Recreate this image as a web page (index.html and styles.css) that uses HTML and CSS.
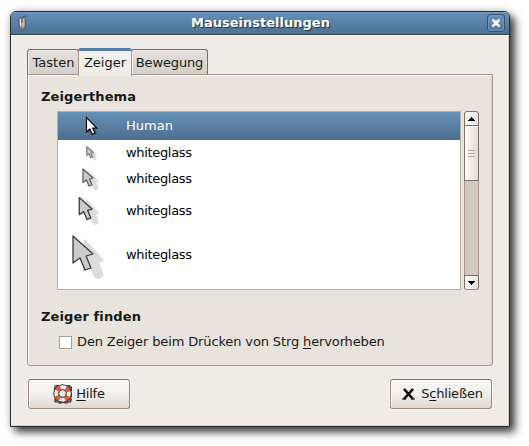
FILE: index.html
```html
<!DOCTYPE html>
<html lang="de">
<head>
<meta charset="utf-8">
<title>Mauseinstellungen</title>
<link rel="stylesheet" href="styles.css">
</head>
<body>
<svg class="defs" width="0" height="0" aria-hidden="true">
  <defs>
    <symbol id="glass" viewBox="0 0 36 46">
      <path d="M14 7l17 19-4.500 2 4.500 13q-3 4-7 1l-5-11-6 5z" fill="#dcdcdc" stroke="#dcdcdc" stroke-width="3" stroke-linejoin="round"/>
      <path d="M2 2v27l7-5 5 12 6-2-5-12 7-2z" fill="#cbcbcb" stroke="currentColor" stroke-width="1.300" vector-effect="non-scaling-stroke" stroke-linejoin="round"/>
    </symbol>
  </defs>
</svg>
<main class="window">
  <header class="titlebar">
    <svg class="mouse" width="12" height="16" viewBox="0 0 12 16"><path d="M5 3q0-2 5-2" fill="none" stroke="#3e5567"/><path d="M1.500 4Q3 2 5 2.500 8 2 8.500 4v7q-1 3-3 3.500-3-.5-3.500-4z" fill="#a39f9c" stroke="#4c5158" stroke-width=".8"/><path d="M3.500 4v7M6 4v8" stroke="#e0dcda"/><path d="M5 3v5" stroke="#56514f"/><path d="M5 11v2" stroke="#8c5b4c"/></svg>
    <h1 class="title">Mauseinstellungen</h1>
    <button class="close" aria-label="Schließen"><svg width="8" height="8" viewBox="0 0 8 8"><path d="M.5 .5l7 7M7.500 .5l-7 7" stroke="#fff" stroke-width="2.600"/></svg></button>
  </header>
  <div class="body">
    <nav class="tabs">
      <span class="tab first">Tasten</span><span class="tab active">Zeiger</span><span class="tab last">Bewegung</span>
    </nav>
    <section class="panel">
      <h2 class="heading">Zeigerthema</h2>
      <div class="picker">
        <div class="list">
          <div class="row selected"><span class="cursor"><svg class="human" width="16" height="20" viewBox="0 0 16 20"><path d="M4 3v14l3-3 3 5 3-1-2-5h3z" fill="#2f4a62" opacity=".7"/><path d="M2.500 1.500v14.500l3.300-3 2.300 5.200 2.800-1.200-2.300-5h4.200z" fill="#fff" stroke="#000" stroke-width="1.100"/></svg></span>Human</div>
          <div class="row r2"><span class="cursor"><svg class="small" width="12" height="15"><use href="#glass"/></svg></span><span class="name">whiteglass</span></div>
          <div class="row r3"><span class="cursor"><svg class="medium" width="18" height="23"><use href="#glass"/></svg></span><span class="name">whiteglass</span></div>
          <div class="row r4"><span class="cursor"><svg class="large" width="23" height="30"><use href="#glass"/></svg></span><span class="name">whiteglass</span></div>
          <div class="row r5"><span class="cursor"><svg class="huge" width="36" height="46"><use href="#glass"/></svg></span><span class="name">whiteglass</span></div>
        </div>
        <div class="scrollbar">
          <div class="step up"><svg width="7" height="4" viewBox="0 0 7 4"><path d="M3 0h1v1h1v1h1v1h1v1H0V3h1V2h1V1h1z"/></svg></div>
          <div class="thumb"><i></i><i></i><i></i></div>
          <div class="trough"></div>
          <div class="step down"><svg width="7" height="4" viewBox="0 0 7 4"><path d="M0 0h7v1H6v1H5v1H4v1H3V3H2V2H1V1H0z"/></svg></div>
        </div>
      </div>
      <h2 class="heading find">Zeiger finden</h2>
      <label class="check"><span class="box"></span><span class="label">Den Zeiger beim Drücken von Strg <u>h</u>ervorheben</span></label>
    </section>
    <footer class="actions">
      <button class="button help"><svg width="20" height="20" viewBox="0 0 20 20"><path d="M1.500 2l4-.5 9 0 4 .5 0 4 0 9-1 3.500-4 .5H6l-4-1-.5-4V6z" fill="#68686a" stroke="#343639" stroke-dasharray="4 2"/><circle cx="9.500" cy="9.500" r="6.500" fill="none" stroke="#343434" stroke-width="5.500"/><circle cx="9.500" cy="9.500" r="6.300" fill="none" stroke="#f1f0ed" stroke-width="4"/><circle cx="9.500" cy="9.500" r="6.300" fill="none" stroke="#e95427" stroke-width="4" stroke-dasharray="4.400 5.500" stroke-dashoffset="-2.700"/><circle cx="9.500" cy="9.500" r="3.800" fill="#e9e6e3" stroke="#4a4745"/></svg><span><u>H</u>ilfe</span></button>
      <button class="button shut"><svg width="13" height="12" viewBox="0 0 13 12"><path d="M2 1l9 10M11 1L2 11" stroke="#000" stroke-width="2.600"/><path d="M0 11h4M9 11h4" stroke="#000"/></svg><span>S<u>c</u>hließen</span></button>
    </footer>
  </div>
</main>
</body>
</html>
```

FILE: styles.css
```css
* { box-sizing: border-box; }
body {
  margin: 0;
  padding: 11px 0 0 10px;
  height: 446px;
  overflow: hidden;
  background: #fff;
  color: #151a18;
  font: 13px/16px "DejaVu Sans", sans-serif;
}
.defs { position: absolute; }
svg { display: block; flex: none; }
button { font: inherit; color: inherit; padding: 0; }
u { text-decoration-thickness: 1px; text-underline-offset: 2px; text-decoration-skip-ink: none; }
.window {
  width: 500px;
  height: 416px;
  border: 1px solid #292b2c;
  border-radius: 6px 6px 0 0;
  background: #efebe6;
  box-shadow: 5px 5px 9px rgba(0, 0, 0, .75), 0 0 8px rgba(0, 0, 0, .2);
}
.titlebar {
  height: 23px;
  display: flex;
  align-items: center;
  padding: 0 4px 0 6px;
  border-radius: 5px 5px 0 0;
  border-bottom: 1px solid #304657;
  background: linear-gradient(#6f9dc4 0, #628db4 2px, #5983aa 10px, #4d718f 100%);
}
.title {
  flex: 1;
  margin: 0;
  padding-left: 5px;
  text-align: center;
  color: #fff;
  font-size: 13px;
  line-height: 20px;
  text-shadow: 1px 1px 1px #1b2e3e;
}
.close {
  width: 18px;
  height: 18px;
  display: grid;
  place-items: center;
  border: 1px solid #34536e;
  border-radius: 3px;
  background: linear-gradient(#6a92bb, #557ba0);
  box-shadow: inset 0 0 0 1px #6d95bb;
}
.body {
  height: 391px;
  padding: 12px 16px 0;
  border: 1px solid #fff;
  border-width: 1px 1px 1px 0;
  border-right-color: #d8cec2;
  border-bottom-color: #d8cec2;
}
.tabs { display: flex; align-items: flex-end; height: 27px; position: relative; }
.tab {
  height: 26px;
  padding-top: 5px;
  text-align: center;
  border: 1px solid #756d68;
  border-bottom-color: #a69488;
  background: linear-gradient(#e5e0dc, #d5cfca);
  border-radius: 3px 3px 0 0;
  box-shadow: inset 1px 1px #f2eeeb;
}
.first { width: 52px; padding-left: 1px; }
.last { width: 77px; margin-left: -1px; letter-spacing: -.15px; }
.active {
  width: 54px;
  height: 28px;
  margin: 0 0 -1px -1px;
  padding-top: 4px;
  border-color: #a69488;
  border-top: 3px solid #557fa7;
  border-bottom: 0;
  background: linear-gradient(#f4f1ee, #efebe6);
  z-index: 1;
}
.panel {
  width: 466px;
  height: 292px;
  margin-top: -1px;
  padding: 14px 13px 0;
  border: 1px solid #a69488;
  border-radius: 0 0 3px 3px;
  background: #e8e3dd;
  box-shadow: inset 1px 1px #fff, inset -1px 0 #d9d0c7;
}
.heading { margin: 0; font-size: 13px; line-height: 16px; letter-spacing: .12px; }
.picker { display: flex; gap: 3px; height: 179px; margin: 6px 0 0 16px; }
.list { width: 404px; border: 1px solid #b9ae9f; background: #fff; color: #000; }
.row { height: 26px; display: flex; align-items: center; }
.name { letter-spacing: -.33px; }
.cursor { width: 68px; padding-right: 3px; display: flex; justify-content: center; color: #3c3c3c; }
.human { margin-left: 3px; }
.small { color: #858585; margin-left: 2px; }
.medium { color: #5c5c5c; margin-left: 1px; }
.large { margin-right: 2px; }
.huge { margin-right: 4px; }
.selected { height: 28px; background: linear-gradient(#6590b7, #4d6f8e); color: #fff; }
.r4 { height: 38px; }
.r5 { height: 54px; }
.r5 .name { margin-bottom: 4px; }
.scrollbar { width: 15px; display: flex; flex-direction: column; }
.step {
  height: 15px;
  display: grid;
  place-items: center;
  border: 1px solid #7b7068;
  background: linear-gradient(90deg, #fff, #e6e1dc);
}
.up { border-radius: 3px 3px 0 0; }
.down { border-radius: 0 0 3px 3px; border-bottom-color: #958979; }
.thumb {
  height: 56px;
  margin-top: -1px;
  display: flex;
  flex-direction: column;
  align-items: center;
  justify-content: center;
  gap: 2px;
  border: 1px solid #7b7068;
  background: linear-gradient(90deg, #fbfaf9, #e3dcd6);
  box-shadow: inset 1px 1px #fff;
}
.thumb i { width: 7px; height: 1px; background: #b4aaa1; }
.trough { flex: 1; background: #d1c8bf; border: solid #a69488; border-width: 0 1px; }
.find { margin-top: 19px; }
.check { height: 16px; margin: 9px 0 0 18px; display: flex; align-items: center; gap: 5px; }
.label { letter-spacing: -.13px; }
.box { width: 13px; height: 13px; border: 1px solid #a99d90; background: #fff; }
.actions { display: flex; justify-content: space-between; width: 464px; margin: 13px 0 0 1px; }
.button {
  width: 102px;
  height: 30px;
  display: flex;
  align-items: center;
  justify-content: center;
  border: 1px solid #99897a;
  border-top-color: #7d726a;
  border-radius: 3px;
  background: linear-gradient(#faf8f7, #efebe7 60%, #dfd8d0);
  box-shadow: 0 0 0 1px #f8f3ed, inset 1px 1px #fff;
}
.help { gap: 3px; letter-spacing: -.2px; }
.shut { gap: 6px; padding-left: 3px; letter-spacing: -.2px; }
```
